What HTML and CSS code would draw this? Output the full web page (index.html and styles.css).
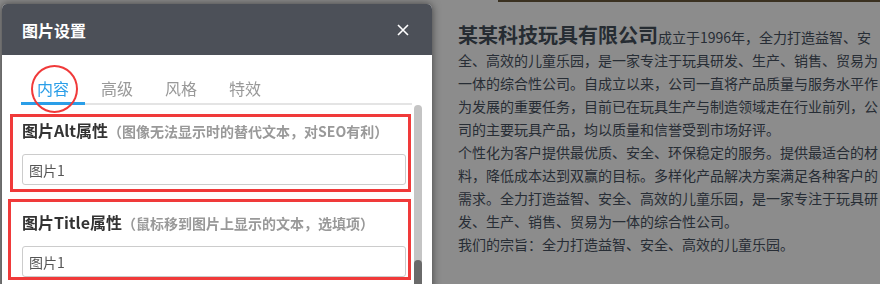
FILE: index.html
```html
<!DOCTYPE html>
<html lang="zh-CN">
<head>
<meta charset="UTF-8">
<meta name="viewport" content="width=device-width, initial-scale=1.0">
<title>图片设置</title>
<link rel="stylesheet" href="styles.css">
</head>
<body>

<div class="page">
  <div class="banner"></div>
  <div class="intro">
    <p><strong class="company">某某科技玩具有限公司</strong>成立于1996年，全力打造益智、安全、高效的儿童乐园，是一家专注于玩具研发、生产、销售、贸易为一体的综合性公司。自成立以来，公司一直将产品质量与服务水平作为发展的重要任务，目前已在玩具生产与制造领域走在行业前列，公司的主要玩具产品，均以质量和信誉受到市场好评。</p>
    <p>个性化为客户提供最优质、安全、环保稳定的服务。提供最适合的材料，降低成本达到双赢的目标。多样化产品解决方案满足各种客户的需求。全力打造益智、安全、高效的儿童乐园，是一家专注于玩具研发、生产、销售、贸易为一体的综合性公司。</p>
    <p>我们的宗旨：全力打造益智、安全、高效的儿童乐园。</p>
  </div>
</div>

<div class="mask"></div>

<div class="dialog">
  <div class="dialog-header">
    <span class="dialog-title">图片设置</span>
    <span class="dialog-close">
      <svg width="12" height="12" viewBox="0 0 12 12"><path d="M1 1 L11 11 M11 1 L1 11" stroke="#fff" stroke-width="1.6" fill="none"/></svg>
    </span>
  </div>

  <div class="tabs">
    <div class="tab active">内容<span class="mark-circle"></span></div>
    <div class="tab">高级</div>
    <div class="tab">风格</div>
    <div class="tab">特效</div>
  </div>

  <div class="dialog-body">
    <div class="fields">
      <div class="field field-alt">
        <div class="field-label">图片Alt属性<span class="field-hint">（图像无法显示时的替代文本，对SEO有利）</span></div>
        <input class="field-input" type="text" value="图片1">
      </div>
      <div class="field field-title">
        <div class="field-label">图片Title属性<span class="field-hint">（鼠标移到图片上显示的文本，选填项）</span></div>
        <input class="field-input" type="text" value="图片1">
      </div>
    </div>
    <div class="scrollbar">
      <div class="scroll-thumb"></div>
    </div>
  </div>
</div>

</body>
</html>
```

FILE: styles.css
```css
body {
  margin: 0;
  padding: 0;
  background: #fff;
  font-family: "Noto Sans CJK SC", "Noto Sans", sans-serif;
  overflow: hidden;
  height: 284px;
}

/* page underneath */
.page {
  padding-left: 458px;
}

.banner {
  height: 2px;
  margin-left: 40px;
  background: #6b5a3c;
}

.intro {
  width: 422px;
  padding-top: 21px;
  font-size: 14px;
  line-height: 23px;
  color: #485262;
  text-autospace: no-autospace;
}

.intro p {
  margin: 0;
}

.company {
  font-size: 20px;
  color: #46505c;
}

.mask {
  position: fixed;
  top: 0;
  left: 0;
  right: 0;
  bottom: 0;
  background: rgba(0, 0, 0, 0.45);
}

/* dialog */
.dialog {
  position: absolute;
  top: 4px;
  left: 2px;
  width: 430px;
  height: 300px;
  background: #fff;
  border-radius: 5px 5px 0 0;
  box-shadow: 0 0 8px rgba(0, 0, 0, 0.55);
  overflow: hidden;
}

.dialog-header {
  height: 51px;
  background: #4c5058;
  display: flex;
  align-items: center;
  justify-content: space-between;
  padding: 1px 23px 0 20px;
  box-sizing: border-box;
}

.dialog-title {
  color: #fff;
  font-size: 16px;
  font-weight: bold;
}

.dialog-close {
  display: flex;
}

.tabs {
  display: flex;
  margin: 21px 20px 0 19px;
  border-bottom: 2px solid #e4e4e4;
}

.tab {
  position: relative;
  font-size: 16px;
  line-height: 24px;
  padding: 0 16px 2px;
  color: #999;
  border-bottom: 3px solid transparent;
  margin-bottom: -2px;
}

.tab.active {
  color: #2a9ee8;
  border-bottom-color: #2a9ee8;
}

/* annotation */
.mark-circle {
  position: absolute;
  left: 10px;
  top: -11px;
  width: 43px;
  height: 44px;
  border: 2px solid #f03a3a;
  border-radius: 50%;
}

.dialog-body {
  display: flex;
  height: 200px;
}

.fields {
  width: 409px;
}

.field {
  border: 3px solid #f03a3a;
}

.field-alt {
  margin: 9px 0 0 8px;
  padding: 0 2px 4px 9px;
}

.field-title {
  margin: 7px 0 0 6px;
  padding: 7px 2px 0 11px;
}

.field-label {
  font-size: 16px;
  line-height: 26px;
  height: 26px;
  font-weight: bold;
  color: #333;
}

.field-hint {
  font-size: 14px;
  line-height: 1;
  color: #999;
}

.field-input {
  display: block;
  width: 100%;
  height: 31px;
  margin-top: 11px;
  box-sizing: border-box;
  border: 1px solid #ccc;
  border-radius: 3px;
  padding: 0 6px;
  font-family: "Noto Sans CJK SC", "Noto Sans", sans-serif;
  font-size: 14px;
  color: #555;
  outline: none;
}

.scrollbar {
  width: 8px;
  margin-left: 3px;
  background: #c4c4c4;
  border-radius: 4px;
  display: flex;
  flex-direction: column;
  justify-content: flex-end;
}

.scroll-thumb {
  height: 45px;
  background: #6a6a6a;
  border-radius: 4px;
}
```
